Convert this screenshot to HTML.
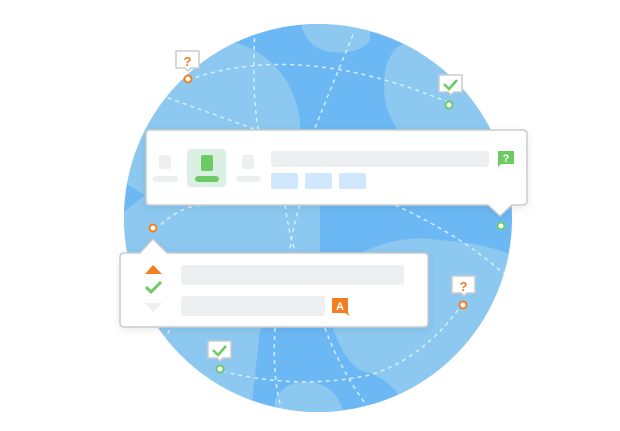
<!DOCTYPE html>
<html><head><meta charset="utf-8"><style>
html,body{margin:0;padding:0;background:#fff;width:620px;height:431px;overflow:hidden}
svg{display:block}
text{font-family:"Liberation Sans",sans-serif;font-weight:bold}
</style></head><body>
<svg width="620" height="431" viewBox="0 0 620 431" xmlns="http://www.w3.org/2000/svg">
<defs>
<clipPath id="g"><circle cx="318" cy="218" r="194"/></clipPath>
<filter id="sh" x="-10%" y="-20%" width="120%" height="150%"><feDropShadow dx="0" dy="2" stdDeviation="4" flood-color="#000" flood-opacity="0.08"/></filter>
</defs>
<circle cx="318" cy="218" r="194" fill="#6cb8f4"/>
<g clip-path="url(#g)" fill="#8cc8ef">
<path d="M100 60 L237 43 Q290 60 300 120 Q300 160 320 200 L320 280 Q300 310 260 330 L250 420 L100 420 Z"/>
<path d="M300 20 L370 20 L370 40 Q360 55 330 52 Q305 48 300 20Z"/>
<path d="M400 45 Q440 40 520 60 L520 200 Q490 180 460 170 Q395 150 385 100 Q380 60 400 45Z"/>
<path d="M320 280 Q380 230 440 240 Q500 245 520 260 L520 420 L410 420 Q400 380 360 370 Q335 355 320 280Z"/>
<path d="M275 400 Q285 380 310 382 Q340 385 345 420 L275 420Z"/>
</g>
<g fill="#6cb8f4" clip-path="url(#g)"><path d="M120 180 L145 195 L120 215Z"/></g>
<g fill="none" stroke="#d8ecfb" stroke-width="1.5" stroke-dasharray="4 4" clip-path="url(#g)">
<path d="M188 80 Q300 40 450 103"/>
<path d="M160 95 Q230 120 270 135"/>
<path d="M255 30 Q250 110 265 160"/>
<path d="M353 35 Q330 90 315 128"/>
<path d="M155 230 Q180 205 205 205"/>
<path d="M285 205 Q290 240 295 250"/>
<path d="M300 205 Q292 230 290 250"/>
<path d="M395 205 Q470 240 510 280"/>
<path d="M458 310 Q420 360 370 375 Q300 390 225 372"/>
<path d="M275 328 Q272 380 282 410"/>
<path d="M325 328 Q340 370 370 410"/>
<path d="M170 330 L160 345"/>
</g>
<!-- card 1 -->
<g filter="url(#sh)">
<path d="M150 130 H523 Q527 130 527 134 V201 Q527 205 523 205 H512 L500 216 L488 205 H150 Q146 205 146 201 V134 Q146 130 150 130Z" fill="#fff" stroke="#c9cbce" stroke-width="1.5"/>
</g>
<rect x="159" y="155" width="12" height="14" rx="2" fill="#eeeff1"/>
<rect x="153" y="176" width="25" height="6" rx="3" fill="#eeeff1"/>
<rect x="187" y="149" width="39" height="38" rx="4" fill="#dcefe3"/>
<rect x="201" y="155" width="12" height="16" rx="2" fill="#6ccc64"/>
<rect x="195" y="176" width="24" height="6" rx="3" fill="#6ccc64"/>
<rect x="242" y="155" width="12" height="14" rx="2" fill="#eeeff1"/>
<rect x="236" y="176" width="25" height="6" rx="3" fill="#eeeff1"/>
<rect x="271" y="151" width="218" height="16" rx="3" fill="#eeeff1"/>
<rect x="271" y="173" width="27" height="16" rx="2" fill="#cfe8fd"/>
<rect x="305" y="173" width="27" height="16" rx="2" fill="#cfe8fd"/>
<rect x="339" y="173" width="27" height="16" rx="2" fill="#cfe8fd"/>
<path d="M498 151 H514 V164 H501 L498 167Z" fill="#6ccc64"/>
<text x="506" y="162" font-size="11" fill="#fff" text-anchor="middle">?</text>
<circle cx="501" cy="226" r="3.5" fill="#fff" stroke="#6ccc64" stroke-width="2"/>
<!-- card 2 -->
<circle cx="153" cy="228" r="3.5" fill="#fff" stroke="#f37f22" stroke-width="2"/>
<g filter="url(#sh)">
<path d="M124 253 H140 L153 239 L167 253 H424 Q428 253 428 257 V323 Q428 327 424 327 H124 Q120 327 120 323 V257 Q120 253 124 253Z" fill="#fff" stroke="#c9cbce" stroke-width="1.5"/>
</g>
<path d="M145 274 L153 265 L162 274Z" fill="#f37f22"/>
<path d="M146 287 L151 292 L161 282" fill="none" stroke="#6ccc64" stroke-width="3"/>
<path d="M145 303 L162 303 L153 312Z" fill="#eeeff1"/>
<rect x="181" y="265" width="223" height="20" rx="3" fill="#eeeff1"/>
<rect x="181" y="296" width="144" height="20" rx="3" fill="#eeeff1"/>
<path d="M332 298 H348 V313 L350 316 L345 313 H332Z" fill="#f37f22"/>
<text x="340" y="310" font-size="11" fill="#fff" text-anchor="middle">A</text>
<!-- markers -->
<g stroke="#c9cbce" stroke-width="1.5" fill="#fff">
<path d="M176 51 H199 V68 H191 L188 71 L185 68 H176Z"/>
<path d="M439 75 H462 V92 H454 L451 95 L448 92 H439Z"/>
<path d="M452 276 H475 V293 H467 L464 296 L461 293 H452Z"/>
<path d="M208 341 H231 V358 H223 L220 361 L217 358 H208Z"/>
</g>
<text x="187.5" y="66" font-size="13" fill="#f37f22" text-anchor="middle">?</text>
<text x="463.5" y="291" font-size="13" fill="#f37f22" text-anchor="middle">?</text>
<path d="M444 84 L449 89 L457 80" fill="none" stroke="#6ccc64" stroke-width="2.5"/>
<path d="M213 350 L218 355 L226 346" fill="none" stroke="#6ccc64" stroke-width="2.5"/>
<circle cx="188" cy="79" r="3.5" fill="#fff" stroke="#f37f22" stroke-width="2"/>
<circle cx="449" cy="105" r="3.5" fill="#fff" stroke="#6ccc64" stroke-width="2"/>
<circle cx="463" cy="305" r="3.5" fill="#fff" stroke="#f37f22" stroke-width="2"/>
<circle cx="220" cy="369" r="3.5" fill="#fff" stroke="#6ccc64" stroke-width="2"/>
</svg>
</body></html>
